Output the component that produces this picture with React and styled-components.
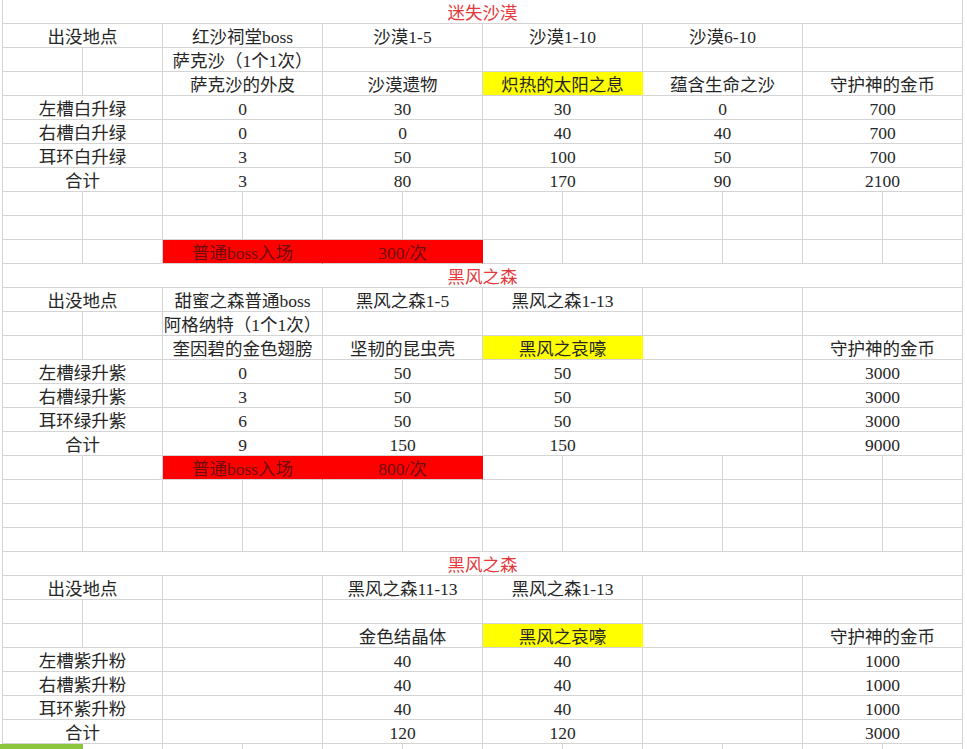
import React from 'react';
import styled, { createGlobalStyle, css } from 'styled-components';

const Global = createGlobalStyle`
  html, body { margin: 0; padding: 0; background: #ffffff; overflow: hidden; }
  #root { width: 967px; height: 749px; overflow: hidden; }
`;

const Sheet = styled.div`
  display: grid;
  grid-template-columns: repeat(12, 80px);
  grid-auto-rows: 24px;
  margin-left: 2px;
  border-left: 1px solid #d4d4d4;
  width: 960px;
  font-family: "Liberation Serif", "Noto Sans CJK SC", serif;
  font-size: 17.5px;
  line-height: 20px;
  color: #262626;
`;

const variants = {
  title: css`color: #e5383b;`,
  yellow: css`background: #ffff00; border-right-color: #ffff00;`,
  red: css`background: #ff0000; border-right-color: #ff0000; color: #6e0c0c;`,
  green: css`background: #8cc63f; margin-left: -3px; border-right-color: #8cc63f;`,
};

const Cell = styled.div`
  grid-column: span ${(p) => p.$span};
  box-sizing: border-box;
  border-right: 1px solid #d4d4d4;
  border-bottom: 1px solid #d4d4d4;
  display: flex;
  align-items: flex-end;
  justify-content: center;
  white-space: nowrap;
  overflow: visible;
  ${(p) => p.$variant && variants[p.$variant]}
`;

const singles = (n) => Array.from({ length: n }, () => [1, '']);
const pairs = (texts) => texts.map((t) => [2, t]);

const rows = [
  [[12, '迷失沙漠', 'title']],
  pairs(['出没地点', '红沙祠堂boss', '沙漠1-5', '沙漠1-10', '沙漠6-10', '']),
  [[1, ''], [1, ''], ...pairs(['萨克沙（1个1次）', '', '', '', ''])],
  [[1, ''], [1, ''], [2, '萨克沙的外皮'], [2, '沙漠遗物'], [2, '炽热的太阳之息', 'yellow'], [2, '蕴含生命之沙'], [2, '守护神的金币']],
  pairs(['左槽白升绿', '0', '30', '30', '0', '700']),
  pairs(['右槽白升绿', '0', '0', '40', '40', '700']),
  pairs(['耳环白升绿', '3', '50', '100', '50', '700']),
  pairs(['合计', '3', '80', '170', '90', '2100']),
  singles(12),
  singles(12),
  [[1, ''], [1, ''], [2, '普通boss入场', 'red'], [2, '300/次', 'red'], ...singles(6)],
  [[12, '黑风之森', 'title']],
  pairs(['出没地点', '甜蜜之森普通boss', '黑风之森1-5', '黑风之森1-13', '', '']),
  [[1, ''], [1, ''], ...pairs(['阿格纳特（1个1次）', '', '', '', ''])],
  [[1, ''], [1, ''], [2, '奎因碧的金色翅膀'], [2, '坚韧的昆虫壳'], [2, '黑风之哀嚎', 'yellow'], [2, ''], [2, '守护神的金币']],
  pairs(['左槽绿升紫', '0', '50', '50', '', '3000']),
  pairs(['右槽绿升紫', '3', '50', '50', '', '3000']),
  pairs(['耳环绿升紫', '6', '50', '50', '', '3000']),
  pairs(['合计', '9', '150', '150', '', '9000']),
  [[1, ''], [1, ''], [2, '普通boss入场', 'red'], [2, '800/次', 'red'], ...singles(6)],
  singles(12),
  singles(12),
  singles(12),
  [[12, '黑风之森', 'title']],
  pairs(['出没地点', '', '黑风之森11-13', '黑风之森1-13', '', '']),
  [[1, ''], [1, ''], ...pairs(['', '', '', '', ''])],
  [[1, ''], [1, ''], [2, ''], [2, '金色结晶体'], [2, '黑风之哀嚎', 'yellow'], [2, ''], [2, '守护神的金币']],
  pairs(['左槽紫升粉', '', '40', '40', '', '1000']),
  pairs(['右槽紫升粉', '', '40', '40', '', '1000']),
  pairs(['耳环紫升粉', '', '40', '40', '', '1000']),
  pairs(['合计', '', '120', '120', '', '3000']),
  [[1, '', 'green'], ...singles(11)],
];

export default function App() {
  return (
    <>
      <Global />
      <Sheet>
        {rows.map((row, ri) =>
          row.map(([span, text, variant], ci) => (
            <Cell key={`${ri}-${ci}`} $span={span} $variant={variant}>
              {text}
            </Cell>
          ))
        )}
      </Sheet>
    </>
  );
}
